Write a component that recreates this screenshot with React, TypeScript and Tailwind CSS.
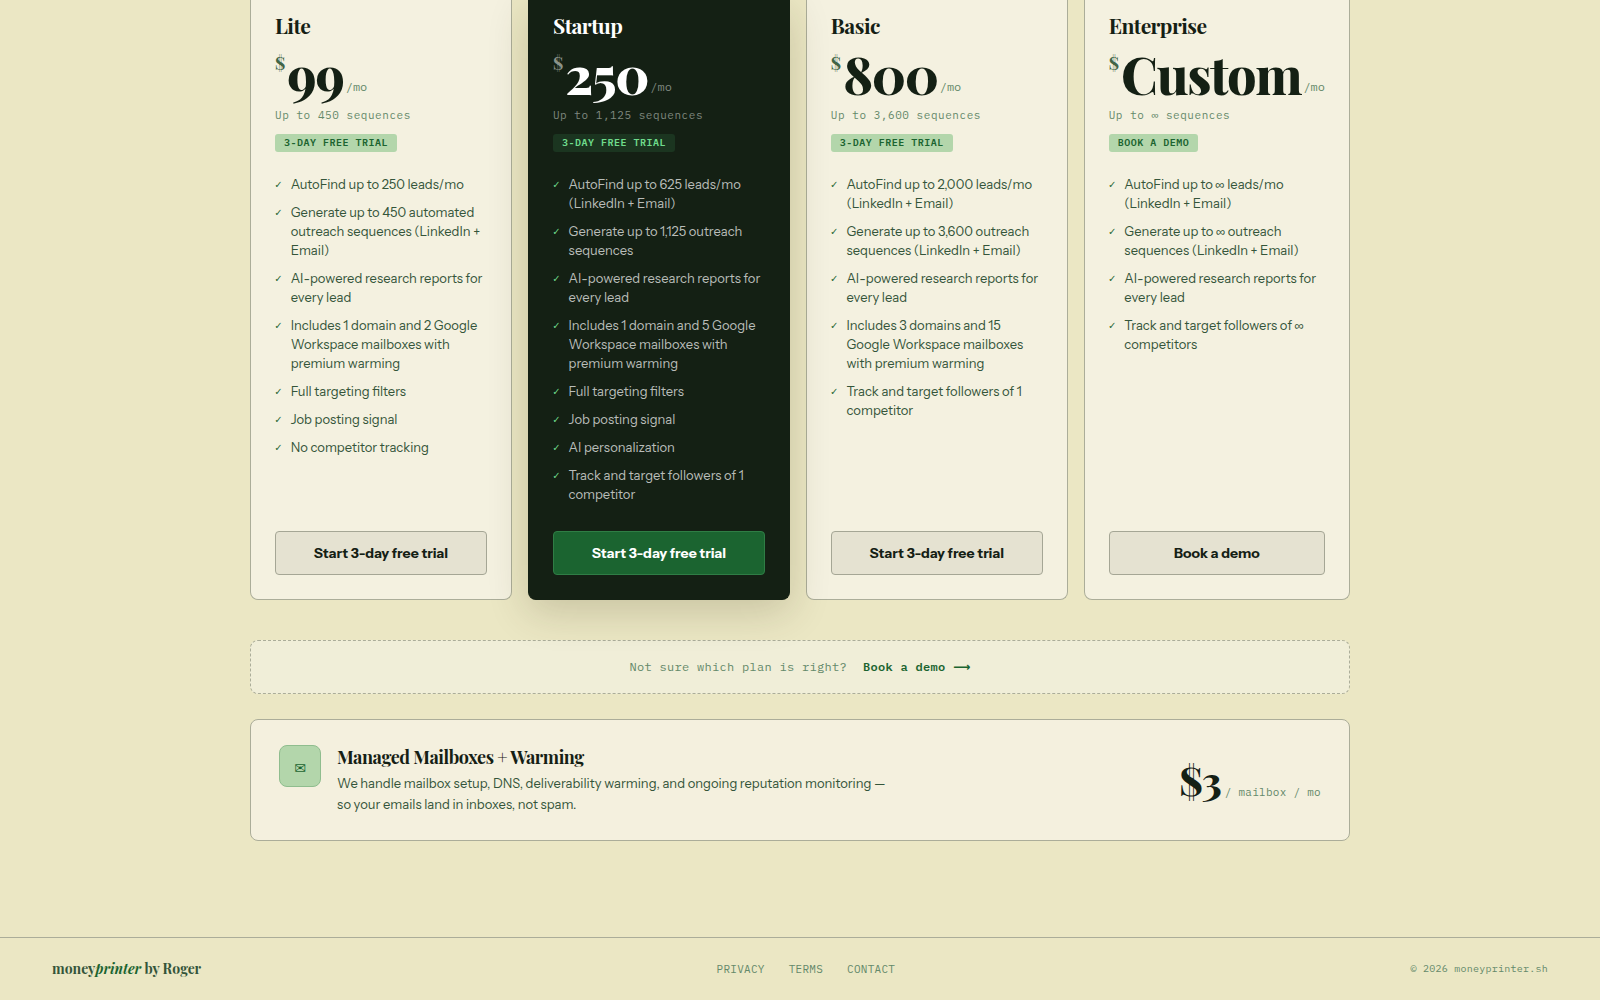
import { clsx } from "clsx";

type Plan = {
  name: string;
  price: string;
  volume: string;
  badge: string;
  cta: string;
  featured?: boolean;
  features: string[];
};

const plans: Plan[] = [
  {
    name: "Lite",
    price: "99",
    volume: "450",
    badge: "3-DAY FREE TRIAL",
    cta: "Start 3-day free trial",
    features: [
      "AutoFind up to 250 leads/mo",
      "Generate up to 450 automated outreach sequences (LinkedIn + Email)",
      "AI-powered research reports for every lead",
      "Includes 1 domain and 2 Google Workspace mailboxes with premium warming",
      "Full targeting filters",
      "Job posting signal",
      "No competitor tracking",
    ],
  },
  {
    name: "Startup",
    price: "250",
    volume: "1,125",
    badge: "3-DAY FREE TRIAL",
    cta: "Start 3-day free trial",
    featured: true,
    features: [
      "AutoFind up to 625 leads/mo (LinkedIn + Email)",
      "Generate up to 1,125 outreach sequences",
      "AI-powered research reports for every lead",
      "Includes 1 domain and 5 Google Workspace mailboxes with premium warming",
      "Full targeting filters",
      "Job posting signal",
      "AI personalization",
      "Track and target followers of 1 competitor",
    ],
  },
  {
    name: "Basic",
    price: "800",
    volume: "3,600",
    badge: "3-DAY FREE TRIAL",
    cta: "Start 3-day free trial",
    features: [
      "AutoFind up to 2,000 leads/mo (LinkedIn + Email)",
      "Generate up to 3,600 outreach sequences (LinkedIn + Email)",
      "AI-powered research reports for every lead",
      "Includes 3 domains and 15 Google Workspace mailboxes with premium warming",
      "Track and target followers of 1 competitor",
    ],
  },
  {
    name: "Enterprise",
    price: "Custom",
    volume: "∞",
    badge: "BOOK A DEMO",
    cta: "Book a demo",
    features: [
      "AutoFind up to ∞ leads/mo (LinkedIn + Email)",
      "Generate up to ∞ outreach sequences (LinkedIn + Email)",
      "AI-powered research reports for every lead",
      "Track and target followers of ∞ competitors",
    ],
  },
];

const serif = "font-['Playfair_Display','Liberation_Serif',serif]";
const mono = "font-['IBM_Plex_Mono','Liberation_Mono',monospace]";

function PlanCard({ plan }: { plan: Plan }) {
  const { featured } = plan;

  return (
    <article
      className={clsx(
        "flex flex-col rounded-b-lg border border-t-0 px-6 pt-[11px] pb-6",
        featured
          ? "relative z-10 border-[#142014] bg-[#142014] shadow-[0_12px_40px_rgba(60,50,20,0.2)]"
          : "border-[#abad99] bg-[#f4f1e0]"
      )}
    >
      <h3
        className={clsx(
          serif,
          "text-[21px] leading-7 font-bold tracking-tight",
          featured ? "text-white" : "text-[#142014]"
        )}
      >
        {plan.name}
      </h3>

      <div className="mt-2 flex items-start whitespace-nowrap">
        <span
          className={clsx(serif, "mr-0.5 text-lg leading-8 font-bold", featured ? "text-[#8b938a]" : "text-[#416546]")}
        >
          $
        </span>
        <span
          className={clsx(
            serif,
            "text-[52px] leading-[54px] font-extrabold tracking-tight",
            featured ? "text-white" : "text-[#142014]"
          )}
        >
          {plan.price}
        </span>
        <span
          className={clsx(mono, "ml-0.5 self-end pb-1.5 text-xs leading-4", featured ? "text-[#7f887f]" : "text-[#64896a]")}
        >
          /mo
        </span>
      </div>

      <p
        className={clsx(
          mono,
          "mt-1.5 text-[11px] leading-4 tracking-wider",
          featured ? "text-[#7f887f]" : "text-[#64896a]"
        )}
      >
        Up to {plan.volume} sequences
      </p>

      <span
        className={clsx(
          mono,
          "mt-[11px] self-start rounded-[3px] px-[9px] text-[10px] leading-[18px] font-semibold tracking-wider",
          featured ? "bg-[#1b3520] text-[#6fdc8c]" : "bg-[#b3d6ab] text-[#1b6430]"
        )}
      >
        {plan.badge}
      </span>

      <ul className="mt-[23px] mb-[27px] flex flex-1 flex-col gap-[9px]">
        {plan.features.map((feature) => (
          <li key={feature} className="flex gap-[9px] leading-[19px]">
            <span
              aria-hidden="true"
              className={clsx(
                "shrink-0 font-['DejaVu_Sans_Mono',monospace] text-[11px]",
                featured ? "text-[#6fdc8c]" : "text-[#1b6430]"
              )}
            >
              ✓
            </span>
            <span className={clsx("text-[13px]", featured ? "text-[#b9bdb9]" : "text-[#34553a]")}>{feature}</span>
          </li>
        ))}
      </ul>

      <button
        type="button"
        className={clsx(
          "h-11 cursor-pointer rounded border text-sm font-bold",
          featured ? "border-[#2f7d45] bg-[#1b6430] text-white" : "border-[#a5a695] bg-[#e5e2d1] text-[#142014]"
        )}
      >
        {plan.cta}
      </button>
    </article>
  );
}

function MailboxAddon() {
  return (
    <section className="mt-[25px] flex items-center justify-between gap-8 rounded-lg border border-[#abad99] bg-[#f4f0de] px-7 py-[25px]">
      <div className="flex items-start gap-4">
        <div className="flex size-[42px] shrink-0 items-center justify-center rounded-lg border border-[#8fbd8e] bg-[#b3d6ab] pt-1 font-['DejaVu_Sans',sans-serif] text-sm text-[#1b6430]">
          ✉
        </div>
        <div className="max-w-[560px]">
          <h3 className={clsx(serif, "text-lg leading-6 font-bold tracking-tight text-[#142014]")}>
            Managed Mailboxes + Warming
          </h3>
          <p className="mt-1 text-[13px] leading-[21px] text-[#34553a]">
            We handle mailbox setup, DNS, deliverability warming, and ongoing reputation monitoring — so your emails
            land in inboxes, not spam.
          </p>
        </div>
      </div>
      <div className="flex shrink-0 items-baseline gap-1">
        <span className={clsx(serif, "text-[40px] leading-[48px] font-extrabold tracking-tight text-[#142014]")}>
          $3
        </span>
        <span className={clsx(mono, "text-[11px] tracking-wide text-[#64896a]")}>/ mailbox / mo</span>
      </div>
    </section>
  );
}

function Footer() {
  return (
    <footer className="flex items-center justify-between border-t border-[#abad99] px-13 py-5">
      <div className={clsx(serif, "text-sm leading-[22px] font-bold text-[#34553a]")}>
        money<em className="text-[#1b6430]">printer</em> by Roger
      </div>
      <nav className={clsx(mono, "flex gap-6 text-[11px] leading-4 tracking-wide text-[#64896a]")}>
        <a href="#privacy">PRIVACY</a>
        <a href="#terms">TERMS</a>
        <a href="#contact">CONTACT</a>
      </nav>
      <div className={clsx(mono, "text-[10px] leading-4 tracking-wide text-[#64896a]")}>© 2026 moneyprinter.sh</div>
    </footer>
  );
}

export default function App() {
  return (
    <div className="flex min-h-screen flex-col bg-[#ebe7c4] font-['Instrument_Sans','Liberation_Sans',sans-serif]">
      <main className="mx-auto w-full max-w-[1100px] flex-1 pb-24">
        <div className="grid grid-cols-[repeat(4,minmax(auto,1fr))] gap-4">
          {plans.map((plan) => (
            <PlanCard key={plan.name} plan={plan} />
          ))}
        </div>

        <p
          className={clsx(
            mono,
            "mt-10 flex items-center justify-center gap-4 rounded-lg border border-dashed border-[#abad99] bg-[#f0eed8] py-[15px] text-xs leading-[22px] tracking-wide text-[#64896a]"
          )}
        >
          Not sure which plan is right?
          <a href="#demo" className="font-semibold text-[#1b6430]">
            Book a demo <span className="font-['DejaVu_Sans',sans-serif]">⟶</span>
          </a>
        </p>

        <MailboxAddon />
      </main>
      <Footer />
    </div>
  );
}
